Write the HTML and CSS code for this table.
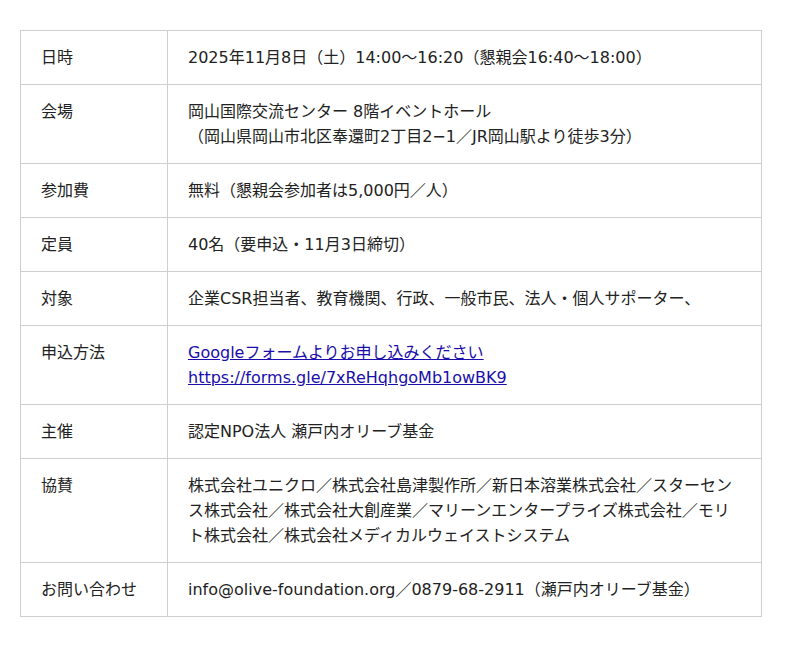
FILE: index.html
```html
<!DOCTYPE html>
<html lang="ja">
<head>
<meta charset="utf-8">
<link rel="stylesheet" href="styles.css">
</head>
<body>
<table class="info">
  <tr><th>日時</th><td>2025年11月8日（土）14:00〜16:20（懇親会16:40〜18:00）</td></tr>
  <tr><th>会場</th><td>岡山国際交流センター 8階イベントホール<br>（岡山県岡山市北区奉還町2丁目2−1／JR岡山駅より徒歩3分）</td></tr>
  <tr><th>参加費</th><td>無料（懇親会参加者は5,000円／人）</td></tr>
  <tr><th>定員</th><td>40名（要申込・11月3日締切）</td></tr>
  <tr><th>対象</th><td>企業CSR担当者、教育機関、行政、一般市民、法人・個人サポーター、</td></tr>
  <tr><th>申込方法</th><td><a href="#">Googleフォームよりお申し込みください</a><br><a href="#">https://forms.gle/7xReHqhgoMb1owBK9</a></td></tr>
  <tr><th>主催</th><td>認定NPO法人 瀬戸内オリーブ基金</td></tr>
  <tr><th>協賛</th><td>株式会社ユニクロ／株式会社島津製作所／新日本溶業株式会社／スターセンス株式会社／株式会社大創産業／マリーンエンタープライズ株式会社／モリト株式会社／株式会社メディカルウェイストシステム</td></tr>
  <tr><th>お問い合わせ</th><td>info@olive-foundation.org／0879-68-2911（瀬戸内オリーブ基金）</td></tr>
</table>
</body>
</html>
```
FILE: styles.css
```css
html, body {
  margin: 0;
  padding: 0;
  background: #fff;
}
body {
  padding: 30px 38px 30px 20px;
  font-family: "DejaVu Sans", "Noto Sans CJK JP", sans-serif;
  font-size: 16px;
  line-height: 25px;
  color: #222;
}
.info {
  width: 742px;
  border-collapse: collapse;
  border: 1px solid #d8d8d8;
}
.info th,
.info td {
  border: 1px solid #cfcfcf;
  padding: 14px 20px;
  text-align: left;
  vertical-align: top;
  font-weight: normal;
}
.info th {
  width: 106px;
}
.info a {
  color: #1a0dab;
  text-decoration: underline;
}
```
